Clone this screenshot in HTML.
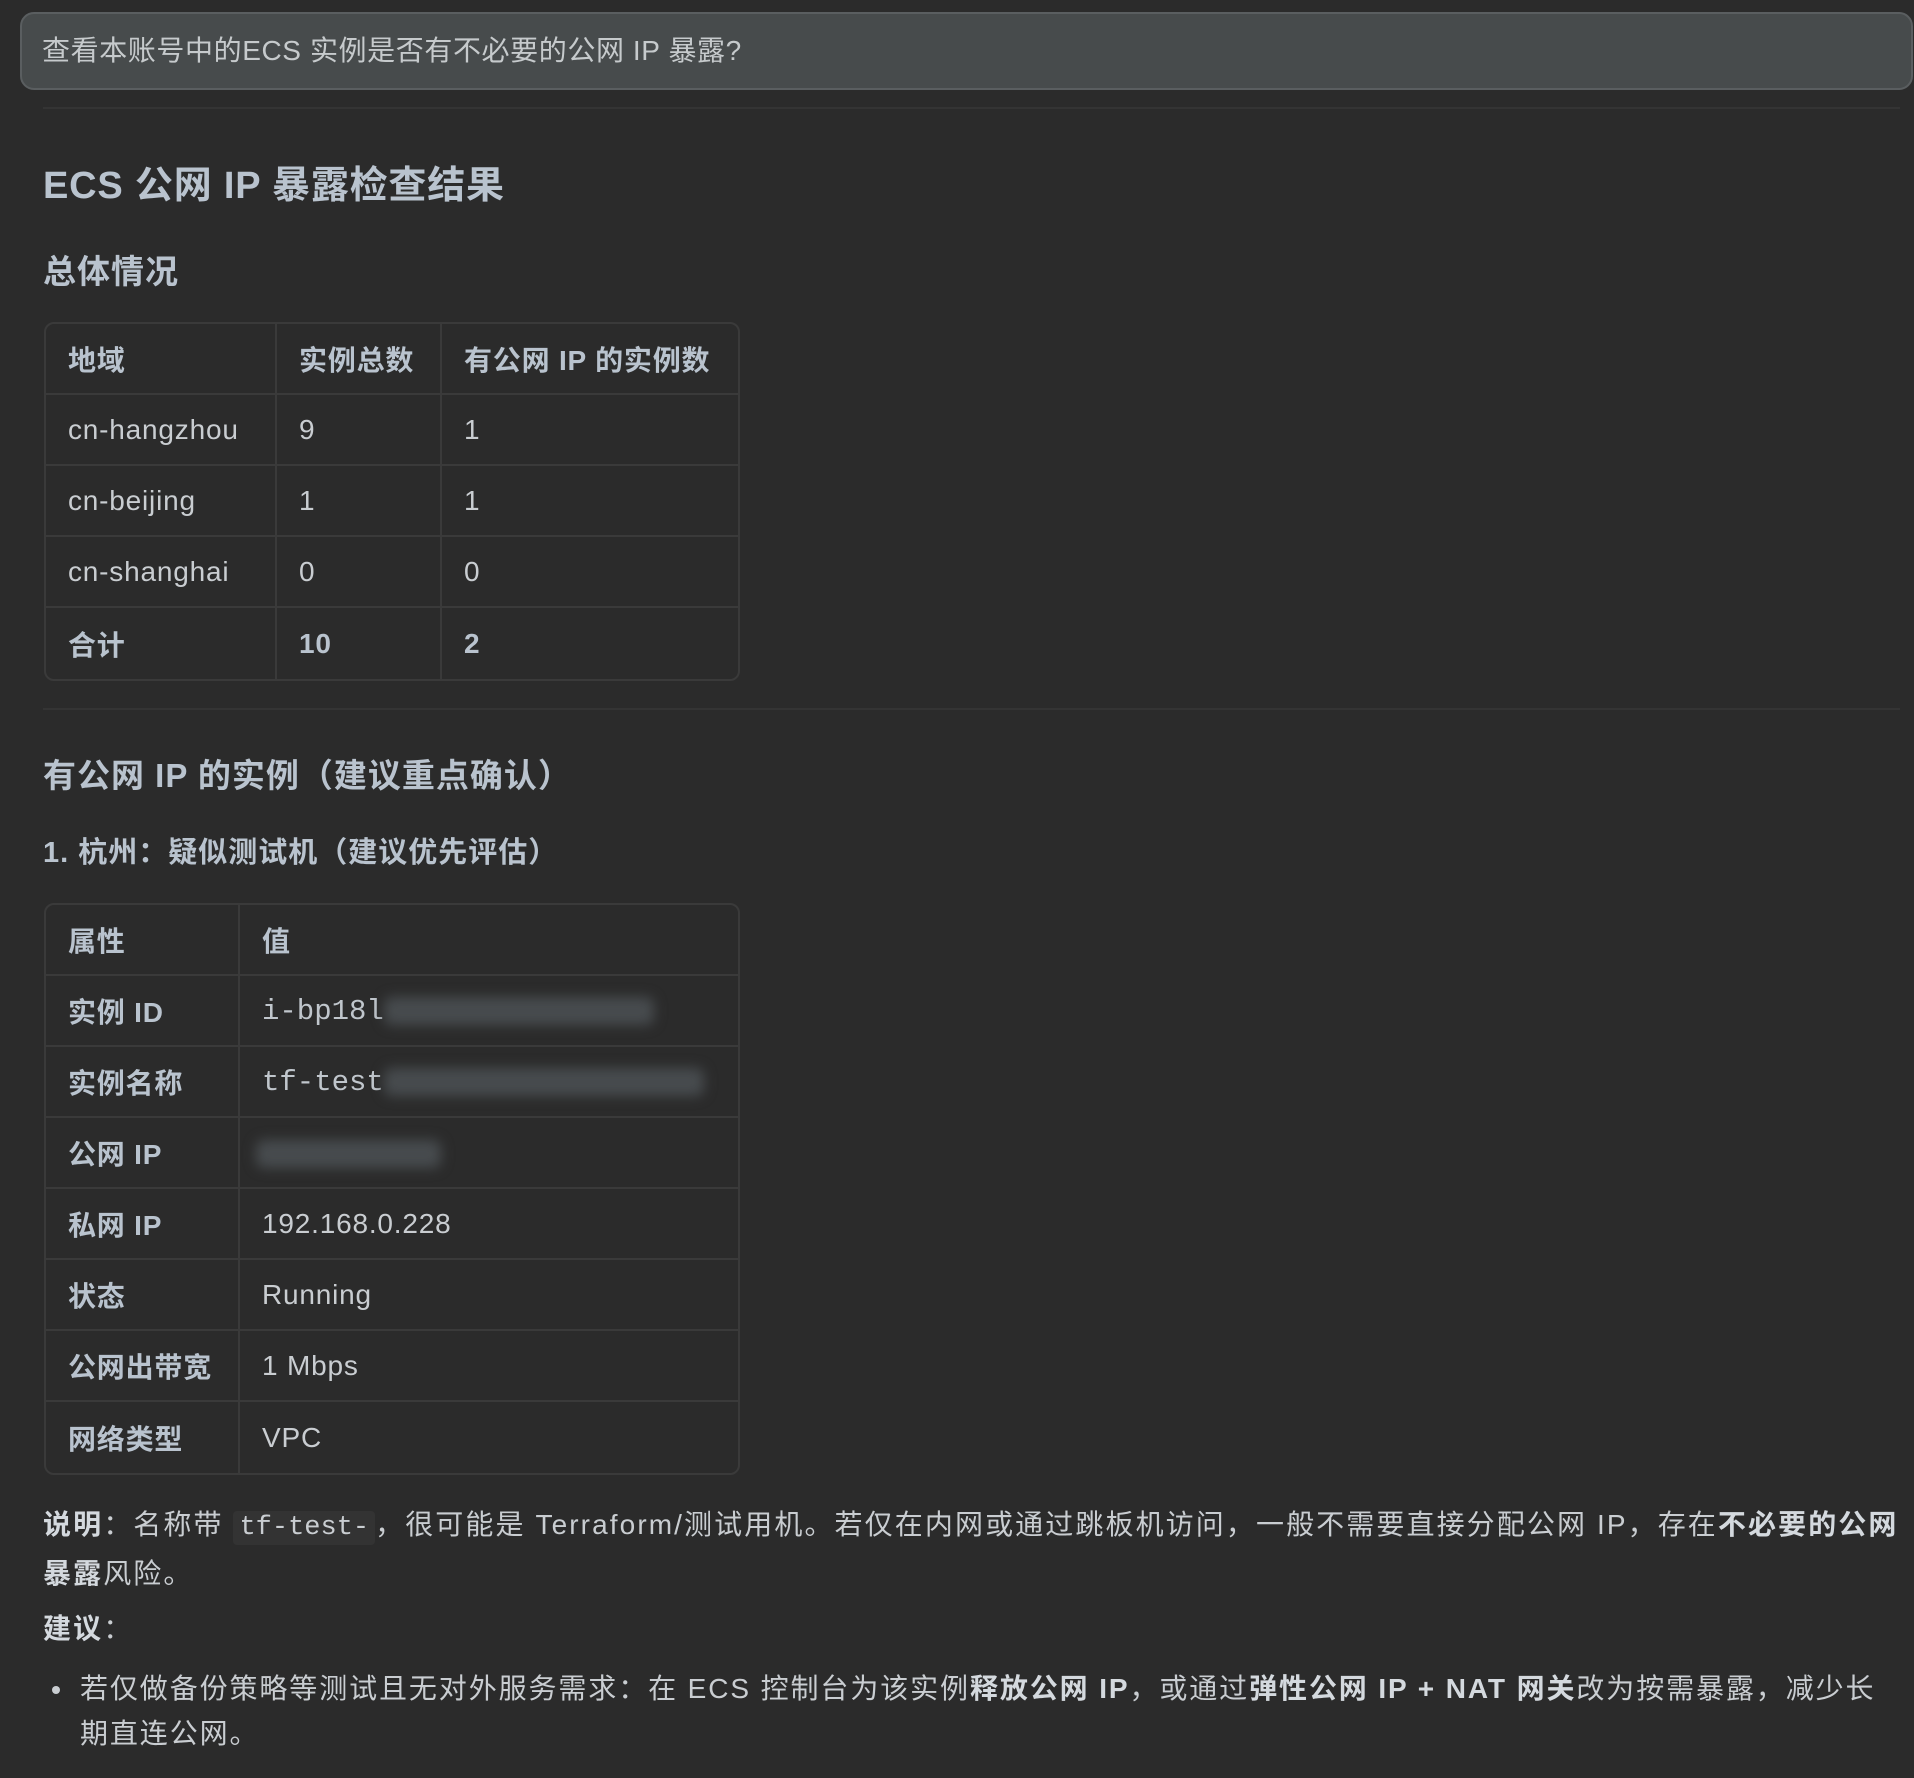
<!DOCTYPE html>
<html><head><meta charset="utf-8"><style>
*{margin:0;padding:0;box-sizing:border-box}
body{width:1914px;height:1778px;overflow:hidden;background:#2b2b2b;font-family:"Liberation Sans","Noto Sans CJK SC",sans-serif;color:#c9cdd1;position:relative}
.abs{position:absolute}
.q{left:20px;top:12px;width:1893px;height:78px;background:#474b4c;border:2px solid #5a5e60;border-radius:14px;font-size:28px;letter-spacing:0.6px;color:#c6cacc;padding-left:20px;line-height:74px}
.hr{height:2px;background:#343434;left:43px;width:1857px}
h1,h2,h3{position:absolute;color:#b9c3ce;font-weight:bold;left:43px;white-space:nowrap}
table{position:absolute;left:44px;border-collapse:separate;border-spacing:0;border:2px solid #3a3a3a;border-radius:10px;font-size:28px;letter-spacing:0.8px}
td{height:71px;padding:0 22px;border-right:2px solid #3a3a3a;border-bottom:2px solid #3a3a3a;white-space:nowrap}
td:last-child{border-right:none}
tr:last-child td{border-bottom:none}
.b{font-weight:bold;color:#b9c3ce}
.mono{font-family:"Liberation Mono",monospace;color:#c0c6cc;font-size:29px;letter-spacing:0}
.blur{display:inline-block;vertical-align:middle;background:#474b4e;filter:blur(6px);height:28px;border-radius:8px}
p{position:absolute;left:43px;font-size:28px;line-height:45px;letter-spacing:2.1px;white-space:nowrap}
code{font-family:"Liberation Mono",monospace;background:#333;padding:2px 6px;border-radius:4px;font-size:27px;letter-spacing:0}
strong{color:#d4d9de}
</style></head><body>
<div class="abs q">查看本账号中的ECS 实例是否有不必要的公网 IP 暴露?</div>
<div class="abs hr" style="top:107px"></div>
<h1 style="top:154px;font-size:38px;letter-spacing:0.8px">ECS 公网 IP 暴露检查结果</h1>
<h2 style="top:245px;font-size:33px;letter-spacing:1px">总体情况</h2>
<table style="top:322px">
<tr><td class="b" style="width:231px">地域</td><td class="b" style="width:165px">实例总数</td><td class="b" style="width:296px">有公网 IP 的实例数</td></tr>
<tr><td>cn-hangzhou</td><td>9</td><td>1</td></tr>
<tr><td>cn-beijing</td><td>1</td><td>1</td></tr>
<tr><td>cn-shanghai</td><td>0</td><td>0</td></tr>
<tr><td class="b">合计</td><td class="b">10</td><td class="b">2</td></tr>
</table>
<div class="abs hr" style="top:708px"></div>
<h2 style="top:749px;font-size:33px;letter-spacing:1px">有公网 IP 的实例（建议重点确认）</h2>
<h3 style="top:829px;font-size:29px;letter-spacing:1px">1. 杭州：疑似测试机（建议优先评估）</h3>
<table style="top:903px">
<tr><td class="b" style="width:194px">属性</td><td class="b" style="width:498px">值</td></tr>
<tr><td class="b">实例 ID</td><td><span class="mono">i-bp18l</span><span class="blur" style="width:270px"></span></td></tr>
<tr><td class="b">实例名称</td><td><span class="mono">tf-test</span><span class="blur" style="width:320px"></span></td></tr>
<tr><td class="b">公网 IP</td><td><span class="blur" style="width:185px;margin-left:-6px"></span></td></tr>
<tr><td class="b">私网 IP</td><td>192.168.0.228</td></tr>
<tr><td class="b">状态</td><td>Running</td></tr>
<tr><td class="b">公网出带宽</td><td>1 Mbps</td></tr>
<tr><td class="b">网络类型</td><td>VPC</td></tr>
</table>
<p style="top:1502px"><strong>说明</strong>：名称带 <code>tf-test-</code>，很可能是 Terraform/测试用机。若仅在内网或通过跳板机访问，一般不需要直接分配公网 IP，存在<strong>不必要的公网</strong><br><strong>暴露</strong>风险。</p>
<p style="top:1606px"><strong>建议</strong>：</p>
<p style="top:1666px;left:80px;letter-spacing:1.9px">若仅做备份策略等测试且无对外服务需求：在 ECS 控制台为该实例<strong>释放公网 IP</strong>，或通过<strong>弹性公网 IP + NAT 网关</strong>改为按需暴露，减少长<br>期直连公网。</p>
<div class="abs" style="left:52px;top:1686px;width:8px;height:8px;border-radius:50%;background:#c9cdd1"></div>
</body></html>
